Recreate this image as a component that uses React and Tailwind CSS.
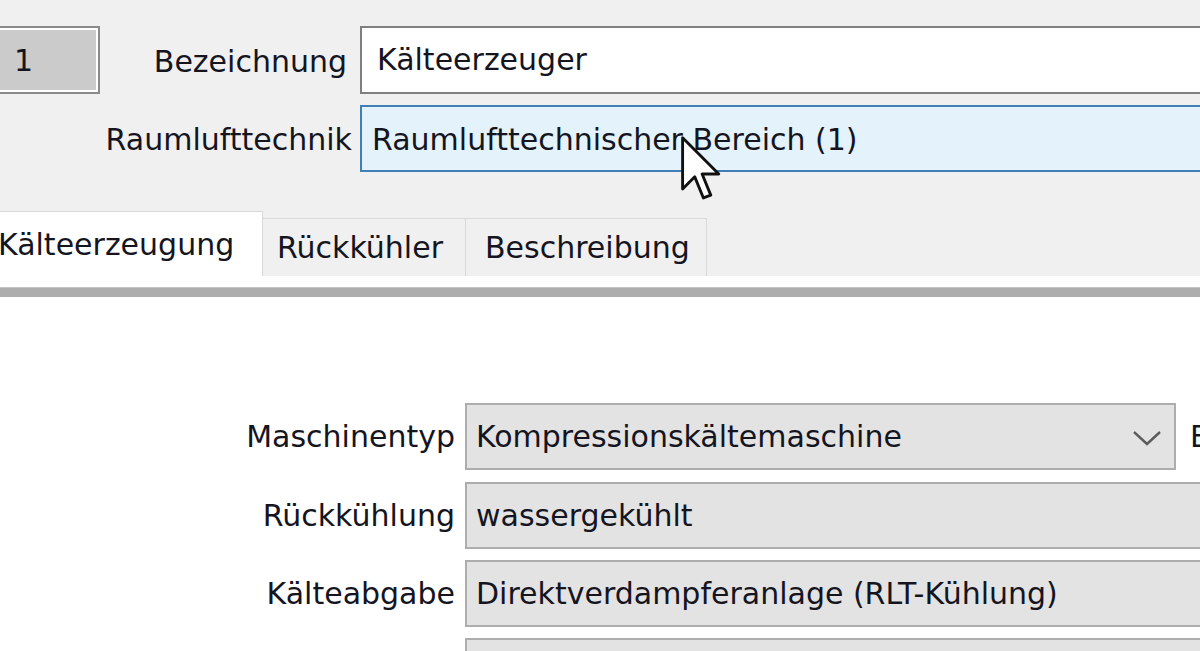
const Cursor = () => (
  <svg
    className="absolute left-[681px] top-[136px]"
    width="40"
    height="66"
    viewBox="0 0 12.5 20.5"
  >
    <polygon
      points="0.5,0.5 0.5,16.5 4.3,12.7 7,19.3 9.3,18.4 6.6,11.8 11.8,11.8"
      fill="#ffffff"
      stroke="#111111"
      strokeWidth="0.9"
      strokeLinejoin="round"
    />
  </svg>
);

const FormRow = ({ label, value, combo, className = "" }) => (
  <div className={`flex items-center h-[67px] ${className}`}>
    <div className="w-[455px] shrink-0 text-right">{label}</div>
    <div
      className={`ml-[10px] h-full border-2 border-[#adadad] bg-[#e3e3e3] flex items-center pl-[9px] ${
        combo ? "w-[711px] shrink-0 pr-[12px]" : "flex-1 -mr-[8px]"
      }`}
    >
      <span className="flex-1 whitespace-nowrap">{value}</span>
      {combo && (
        <svg width="30" height="16" viewBox="0 0 30 16" className="mt-[2px] shrink-0">
          <polyline
            points="2,2 15,14 28,2"
            fill="none"
            stroke="#5c5c5c"
            strokeWidth="2.4"
          />
        </svg>
      )}
    </div>
    {combo && (
      <div className="ml-[14px] shrink-0 whitespace-nowrap">Energieträger</div>
    )}
  </div>
);

export default function App() {
  return (
    <div className="relative w-[1200px] h-[651px] overflow-hidden bg-[#f0f0f0] text-[#15151f] text-[30px] leading-[36px] font-['DejaVu_Sans',sans-serif]">
      {/* header fields */}
      <div className="pt-[26px]">
        <div className="flex items-center h-[68px]">
          <div className="w-[360px] shrink-0 h-full flex items-center">
            <div className="w-[104px] shrink-0 h-full -ml-[4px] border-2 border-[#8a8a8a]">
              <div className="h-full border-2 border-white bg-[#cbcbcb] flex items-center pl-[14px] pt-[2px]">
                1
              </div>
            </div>
            <div className="flex-1 text-right pr-[13px] pt-[3px]">Bezeichnung</div>
          </div>
          <div className="flex-1 h-full -mr-[8px] border-2 border-[#7f7f7f] bg-white flex items-center pl-[15px]">
            Kälteerzeuger
          </div>
        </div>

        <div className="flex items-center h-[67px] mt-[11px]">
          <div className="w-[360px] shrink-0 text-right pr-[8px] pt-[2px]">
            Raumlufttechnik
          </div>
          <div className="flex-1 h-full -mr-[8px] border-2 border-[#3f7fb5] bg-[#e3f2fb] flex items-center pl-[10px] pt-[2px]">
            Raumlufttechnischer Bereich (1)
          </div>
        </div>
      </div>

      {/* tabs */}
      <div className="mt-[39px] flex items-end h-[65px]">
        <div className="w-[263px] shrink-0 h-full bg-white border-t border-r border-[#d9d9d9] flex items-center pt-[1px] overflow-hidden">
          <span className="-ml-[2px] whitespace-nowrap">Kälteerzeugung</span>
        </div>
        <div className="w-[203px] shrink-0 h-[58px] border border-b-0 border-l-0 border-[#d9d9d9] flex items-center pl-[14px]">
          Rückkühler
        </div>
        <div className="w-[241px] shrink-0 h-[58px] border border-b-0 border-l-0 border-[#d9d9d9] flex items-center pl-[19px]">
          Beschreibung
        </div>
      </div>
      <div className="h-[11px] bg-white" />
      <div className="h-[10px] bg-[#adadad] border-t border-[#c4c4c4]" />

      {/* tab page */}
      <div className="h-[400px] bg-white pt-[106px]">
        <FormRow label="Maschinentyp" value="Kompressionskältemaschine" combo />
        <FormRow
          label="Rückkühlung"
          value="wassergekühlt"
          className="mt-[12px]"
        />
        <FormRow
          label="Kälteabgabe"
          value="Direktverdampferanlage (RLT-Kühlung)"
          className="mt-[11px]"
        />
        <FormRow label="" value="" className="mt-[11px]" />
      </div>

      <Cursor />
    </div>
  );
}
